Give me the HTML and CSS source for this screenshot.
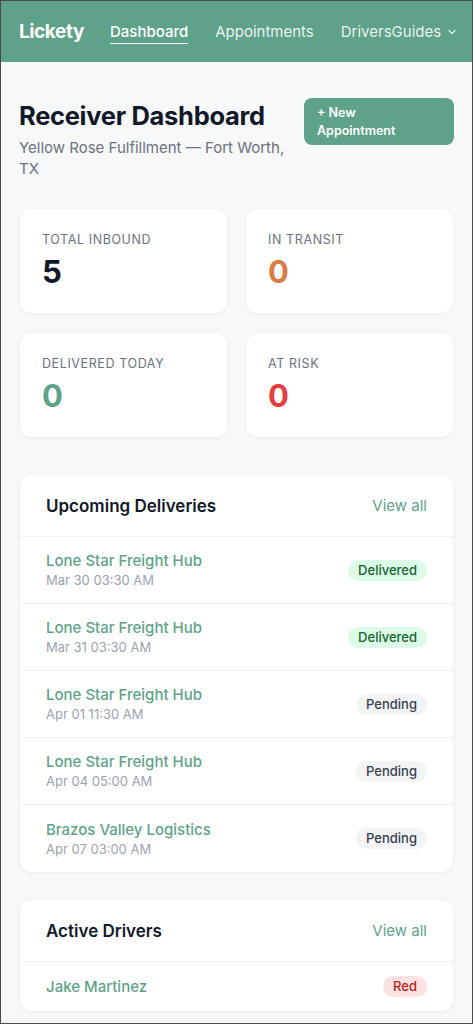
FILE: index.html
```html
<!DOCTYPE html>
<html lang="en">
<head>
<meta charset="UTF-8" />
<meta name="viewport" content="width=device-width, initial-scale=1" />
<title>Receiver Dashboard - Lickety</title>
<link rel="stylesheet" href="styles.css">
</head>
<body>
  <header class="topbar">
    <span class="logo">Lickety</span>
    <nav class="nav">
      <a class="nav-link active" href="#">Dashboard</a>
      <a class="nav-link" href="#">Appointments</a>
      <a class="nav-link" href="#">DriversGuides
        <svg class="chev" width="10" height="10" viewBox="0 0 10 10"><path d="M2 3.5 L5 6.5 L8 3.5" fill="none" stroke="currentColor" stroke-width="1.2" stroke-linecap="round" stroke-linejoin="round"/></svg>
      </a>
    </nav>
  </header>

  <main class="container">
    <section class="page-head">
      <div class="titles">
        <h1>Receiver Dashboard</h1>
        <p class="subtitle">Yellow Rose Fulfillment — Fort Worth, TX</p>
      </div>
      <button class="btn-new">+ New<br>Appointment</button>
    </section>

    <section class="stats">
      <div class="stat">
        <div class="stat-label">Total Inbound</div>
        <div class="stat-value">5</div>
      </div>
      <div class="stat">
        <div class="stat-label">In Transit</div>
        <div class="stat-value orange">0</div>
      </div>
      <div class="stat">
        <div class="stat-label">Delivered Today</div>
        <div class="stat-value green">0</div>
      </div>
      <div class="stat">
        <div class="stat-label">At Risk</div>
        <div class="stat-value red">0</div>
      </div>
    </section>

    <section class="card">
      <div class="card-head">
        <h2>Upcoming Deliveries</h2>
        <a href="#" class="view-all">View all</a>
      </div>
      <div class="row">
        <div>
          <div class="row-name">Lone Star Freight Hub</div>
          <div class="row-date">Mar 30 03:30 AM</div>
        </div>
        <span class="badge badge-green">Delivered</span>
      </div>
      <div class="row">
        <div>
          <div class="row-name">Lone Star Freight Hub</div>
          <div class="row-date">Mar 31 03:30 AM</div>
        </div>
        <span class="badge badge-green">Delivered</span>
      </div>
      <div class="row">
        <div>
          <div class="row-name">Lone Star Freight Hub</div>
          <div class="row-date">Apr 01 11:30 AM</div>
        </div>
        <span class="badge badge-gray">Pending</span>
      </div>
      <div class="row">
        <div>
          <div class="row-name">Lone Star Freight Hub</div>
          <div class="row-date">Apr 04 05:00 AM</div>
        </div>
        <span class="badge badge-gray">Pending</span>
      </div>
      <div class="row">
        <div>
          <div class="row-name">Brazos Valley Logistics</div>
          <div class="row-date">Apr 07 03:00 AM</div>
        </div>
        <span class="badge badge-gray">Pending</span>
      </div>
    </section>

    <section class="card">
      <div class="card-head">
        <h2>Active Drivers</h2>
        <a href="#" class="view-all">View all</a>
      </div>
      <div class="row row-single">
        <div class="row-name">Jake Martinez</div>
        <span class="badge badge-red">Red</span>
      </div>
    </section>
  </main>
</body>
</html>
```

FILE: styles.css
```css
body {
  font-family: Inter, "Noto Sans", Arial, sans-serif;
  background: #f7f8fa;
  margin: 0;
  color: #111827;
}
body::after {
  content: "";
  position: fixed;
  inset: 0;
  border: 1px solid #4b4b4b;
  pointer-events: none;
}
.topbar {
  background: #5fa28a;
  height: 62px;
  display: flex;
  align-items: center;
  padding: 0 19px;
  gap: 26px;
}
.logo {
  color: #fff;
  font-weight: 700;
  font-size: 19px;
  letter-spacing: -0.4px;
}
.nav {
  display: flex;
  gap: 27px;
}
.nav-link {
  color: rgba(255,255,255,0.88);
  text-decoration: none;
  font-size: 15px;
  display: flex;
  align-items: center;
  gap: 6px;
}
.nav-link.active {
  color: #fff;
  font-weight: 500;
  border-bottom: 1.5px solid #fff;
  padding-bottom: 1px;
  margin-bottom: -3px;
}
.chev {
  margin-top: 1px;
}
.container {
  padding: 36px 20px 40px;
}
.page-head {
  display: flex;
  justify-content: space-between;
  align-items: flex-start;
}
.titles {
  width: 270px;
}
h1 {
  font-size: 25.5px;
  font-weight: 700;
  margin: 0 0 3px;
  line-height: 36px;
  letter-spacing: -0.3px;
  color: #111827;
  margin-left: -1px;
}
.subtitle {
  margin: 0 0 0 -1px;
  color: #6b7280;
  font-size: 15px;
  line-height: 21px;
}
.btn-new {
  width: 150px;
  background: #5fa28a;
  color: #fff;
  border: none;
  border-radius: 8px;
  padding: 6px 13px 5px;
  font-family: inherit;
  font-size: 12.5px;
  font-weight: 600;
  line-height: 18px;
  text-align: left;
  margin-right: -1px;
}
.stats {
  display: grid;
  grid-template-columns: 1fr 1fr;
  gap: 20px 19px;
  margin-top: 30px;
}
.stat {
  background: #fff;
  border-radius: 12px;
  box-shadow: 0 1px 4px rgba(0,0,0,0.05);
  padding: 23px 22px 22px;
  height: 104px;
  box-sizing: border-box;
}
.stat-label {
  font-size: 12.5px;
  color: #6b7280;
  text-transform: uppercase;
  letter-spacing: 0.6px;
  line-height: 16px;
}
.stat-value {
  font-size: 31px;
  font-weight: 700;
  line-height: 36px;
  margin-top: 6px;
  color: #111827;
}
.orange { color: #d97d45; }
.green { color: #5fa28a; }
.red { color: #e53e3e; }
.card {
  background: #fff;
  border-radius: 12px;
  box-shadow: 0 1px 4px rgba(0,0,0,0.06);
  margin-top: 38px;
}
.card + .card {
  margin-top: 28px;
}
.card-head {
  display: flex;
  justify-content: space-between;
  align-items: center;
  height: 61px;
  padding: 0 26px;
  border-bottom: 1px solid #f0f1f3;
}
h2 {
  margin: 0;
  font-size: 17px;
  font-weight: 600;
  color: #111827;
}
.view-all {
  color: #5fa28a;
  text-decoration: none;
  font-size: 15px;
}
.row {
  display: flex;
  justify-content: space-between;
  align-items: center;
  height: 67px;
  padding: 0 26px;
  border-bottom: 1px solid #f0f1f3;
  box-sizing: border-box;
}
.row:last-child {
  border-bottom: none;
}
.row-single {
  height: 49px;
}
.row-name {
  color: #5fa28a;
  font-size: 15px;
  font-weight: 500;
  line-height: 20px;
}
.row-date {
  color: #9ca3af;
  font-size: 13px;
  line-height: 18px;
}
.badge {
  font-size: 13px;
  font-weight: 500;
  padding: 2px 10px;
  border-radius: 999px;
  line-height: 17px;
}
.badge-green {
  background: #dcfce7;
  color: #166534;
}
.badge-gray {
  background: #f3f4f6;
  color: #374151;
}
.badge-red {
  background: #fee2e2;
  color: #b91c1c;
}
```
